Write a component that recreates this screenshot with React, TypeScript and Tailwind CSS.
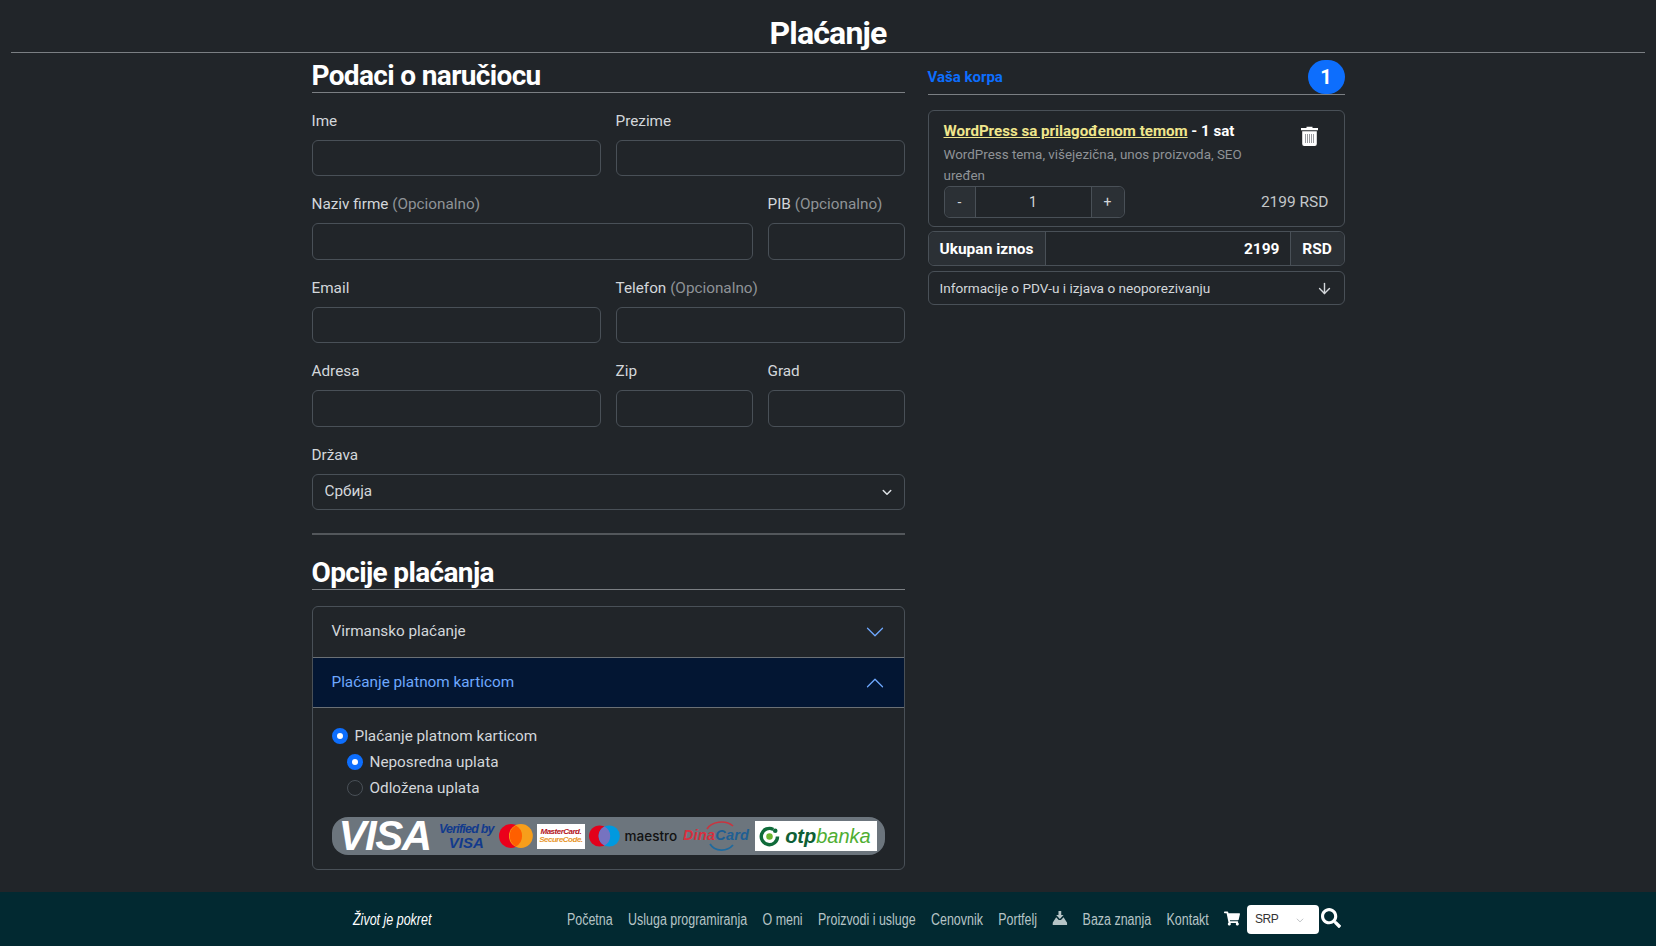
import { ArrowDown } from "lucide-react";
import { FaSearch, FaShoppingCart } from "react-icons/fa";

const Field = ({
  label,
  note,
  span,
}: {
  label: string;
  note?: string;
  span: string;
}) => (
  <div className={span}>
    <label className="block h-6 mb-[7px] leading-6 whitespace-nowrap">
      {label}
      {note && <span className="text-[#8f9397]"> {note}</span>}
    </label>
    <input
      type="text"
      className="block w-full h-[36.5px] rounded-md border border-[#495057] bg-[#212529]"
    />
  </div>
);

const Chevron = ({ up }: { up?: boolean }) => (
  <svg viewBox="0 0 16 16" className="w-5 h-5 text-[#6ea8fe]" fill="currentColor">
    <path
      fillRule="evenodd"
      transform={up ? "rotate(180 8 8)" : undefined}
      d="M1.646 4.646a.5.5 0 0 1 .708 0L8 10.293l5.646-5.647a.5.5 0 0 1 .708.708l-6 6a.5.5 0 0 1-.708 0l-6-6a.5.5 0 0 1 0-.708z"
    />
  </svg>
);

const Radio = ({ checked, label, indent }: { checked?: boolean; label: string; indent?: boolean }) => (
  <label className={`flex items-center gap-[7px] h-[26px] ${indent ? "ml-[15px]" : ""}`}>
    <input
      type="radio"
      readOnly
      checked={!!checked}
      className="appearance-none w-4 h-4 rounded-full border border-[#495057] bg-[#212529] checked:bg-white checked:border-[5px] checked:border-[#0d6efd]"
    />
    {label}
  </label>
);

const CardLogos = () => (
  <div className="flex items-center h-[38px] rounded-[16px] bg-[#6c757d] pl-[7px] pr-[8px] font-['Liberation_Sans',sans-serif]">
    <span className="w-[92px] text-[42px] leading-none font-bold italic tracking-[-1.5px] text-white">VISA</span>
    <div className="w-[58px] ml-[7px] text-center italic font-bold text-[#123a8c]">
      <div className="text-[12.5px] leading-[13px] tracking-[-0.8px] whitespace-nowrap">Verified by</div>
      <div className="text-[15px] leading-[14px]">VISA</div>
    </div>
    <svg viewBox="0 0 34 24" className="w-[34px] h-6 ml-[4px]">
      <circle cx="12" cy="12" r="12" fill="#eb001b" />
      <circle cx="22" cy="12" r="12" fill="#f79e1b" />
      <path d="M17 1.5a12 12 0 0 1 0 21a12 12 0 0 1 0-21z" fill="#ff5f00" />
    </svg>
    <div className="w-[48px] h-[25px] ml-[4px] bg-white flex flex-col items-center justify-center text-[8px] leading-[8px] font-bold italic">
      <span className="text-[#b3131b] tracking-[-0.5px]">MasterCard.</span>
      <span className="text-[#e8962b] tracking-[-0.5px]">SecureCode.</span>
    </div>
    <svg viewBox="0 0 32 24" className="w-[31px] h-6 ml-[4px]">
      <circle cx="11" cy="12" r="11" fill="#e3001b" />
      <circle cx="21" cy="12" r="11" fill="#0099df" />
      <path d="M16 2.2a11 11 0 0 1 0 19.6a11 11 0 0 1 0-19.6z" fill="#7673c0" />
    </svg>
    <span className="ml-[5px] text-[13.5px] font-medium text-[#111] font-['Inter',sans-serif]">maestro</span>
    <div className="relative w-[66px] ml-[6px] h-[32px] flex items-center justify-center">
      <svg viewBox="0 0 66 32" className="absolute inset-0 w-full h-full" fill="none">
        <path d="M24 9C28 2 42 -1 50 6" stroke="#c9343f" strokeWidth="1.6" />
        <path d="M27 24C32 32 44 32 50 25" stroke="#1f6a9e" strokeWidth="1.8" />
      </svg>
      <span className="relative text-[14.5px] font-bold italic tracking-[0.2px] whitespace-nowrap">
        <span className="text-[#d7303f]">Dina</span>
        <span className="text-[#1f5f93]">Card</span>
      </span>
    </div>
    <div className="flex items-center w-[122px] h-[30px] ml-[6px] bg-white pl-[4px] whitespace-nowrap">
      <svg viewBox="0 0 22 22" className="w-[21px] h-[21px]" fill="none">
        <path d="M15 3.6A8.5 8.5 0 1 0 19.4 11" stroke="#0f6b3a" strokeWidth="3.6" />
        <circle cx="11" cy="11" r="3.4" fill="#6cb52d" />
        <circle cx="17" cy="5" r="2.4" fill="#0f6b3a" />
      </svg>
      <span className="ml-[5px] text-[20px] leading-none font-bold italic text-[#0f5f36]">otp</span>
      <span className="text-[20px] leading-none italic text-[#4fae32]">banka</span>
    </div>
  </div>
);

const TrashIcon = () => (
  <svg viewBox="0 0 17 20" className="w-[17px] h-5">
    <path d="M5.5 2V.8h6V2H17v2.2H0V2z" fill="#fff" />
    <path fillRule="evenodd" d="M1.2 5.3h14.6V18a2 2 0 0 1-2 2H3.2a2 2 0 0 1-2-2z" fill="#fff" />
    <path d="M4.5 8v9M6.5 8v9M8.5 8v9M10.5 8v9M12.5 8v9" stroke="#8d9094" strokeWidth="0.9" />
  </svg>
);

const TrayIcon = () => (
  <svg viewBox="0 0 16 14" className="w-[19px] h-[14px] -mt-[4px]" preserveAspectRatio="none" fill="#b6c4c6">
    <path d="M6.5 0h3v4h2.5L8 8 4 4h2.5z" />
    <path d="M4 6.2 6.8 9h2.4L12 6.2 16 12v2H0v-2z" />
  </svg>
);

const navLinks = ["Početna", "Usluga programiranja", "O meni", "Proizvodi i usluge", "Cenovnik", "Portfelj"];

export default function App() {
  return (
    <div className="h-[946px] overflow-hidden flex flex-col bg-[#212529] text-[15.3px] text-[#d3d7db] font-['Roboto',sans-serif]">
      <header className="mx-[11px] h-[53px] border-b border-[#7b7f83]">
        <h1 className="pt-[13px] text-center text-[32px] leading-[40px] font-bold tracking-[-0.8px] text-white">Plaćanje</h1>
      </header>

      <main className="flex-1 mx-auto w-[1033px] flex gap-[23px]">
        <div className="w-[593px]">
          <h2 className="h-10 pt-[3px] border-b border-[#7b7f83] text-[28px] leading-[40px] font-bold tracking-[-0.65px] text-white">
            Podaci o naručiocu
          </h2>
          <div className="grid grid-cols-12 gap-x-[15px] gap-y-[16px] mt-[15.5px]">
            <Field span="col-span-6" label="Ime" />
            <Field span="col-span-6" label="Prezime" />
            <Field span="col-span-9" label="Naziv firme" note="(Opcionalno)" />
            <Field span="col-span-3" label="PIB" note="(Opcionalno)" />
            <Field span="col-span-6" label="Email" />
            <Field span="col-span-6" label="Telefon" note="(Opcionalno)" />
            <Field span="col-span-6" label="Adresa" />
            <Field span="col-span-3" label="Zip" />
            <Field span="col-span-3" label="Grad" />
            <div className="col-span-12">
              <label className="block h-6 mb-[7px] leading-6">Država</label>
              <div className="relative">
                <select className="block w-full h-[36.5px] appearance-none rounded-md border border-[#495057] bg-[#212529] px-3">
                  <option>Србија</option>
                </select>
                <svg viewBox="0 0 16 16" className="absolute right-[12px] top-[12px] w-3 h-3" fill="none" stroke="#dee2e6" strokeWidth="2" strokeLinecap="round" strokeLinejoin="round">
                  <path d="m3 6 5 5 5-5" />
                </svg>
              </div>
            </div>
          </div>

          <hr className="mt-[23px] border-t-2 border-[#53575b]" />

          <h2 className="mt-[18px] h-[37px] border-b border-[#7b7f83] text-[28px] leading-[40px] font-bold tracking-[-0.65px] text-white">
            Opcije plaćanja
          </h2>

          <div className="mt-[16px] rounded-md border border-[#495057]">
            <div className="h-[50px] flex items-center justify-between pl-[19px] pr-[19px]">
              <span className="-mt-[2px]">Virmansko plaćanje</span>
              <Chevron />
            </div>
            <div className="h-[51px] flex items-center justify-between pl-[19px] pr-[19px] bg-[#031633] border-y border-[#6b7075] text-[#6ea8fe]">
              <span>Plaćanje platnom karticom</span>
              <Chevron up />
            </div>
            <div className="px-[19px] pt-[15px] pb-[14px]">
              <Radio checked label="Plaćanje platnom karticom" />
              <Radio checked indent label="Neposredna uplata" />
              <Radio indent label="Odložena uplata" />
              <div className="mt-[16px]">
                <CardLogos />
              </div>
            </div>
          </div>
        </div>

        <aside className="w-[417px]">
          <div className="h-[43px] flex items-center justify-between border-b border-[#7b7f83] mt-[-1px] pt-[8px]">
            <span className="text-[15px] font-bold text-[#0d6efd]">Vaša korpa</span>
            <span className="w-[37px] h-[34px] rounded-full bg-[#0d6efd] flex items-center justify-center text-[20px] font-bold text-white">1</span>
          </div>

          <div className="mt-[15px] h-[117px] rounded-md border border-[#495057] px-[15px] pt-[10px]">
            <div className="flex justify-between">
              <div className="w-[300px]">
                <div className="text-[15.1px] leading-5 font-bold text-white whitespace-nowrap">
                  <a className="underline text-[#f0e68c]">WordPress sa prilagođenom temom</a> - 1 sat
                </div>
                <p className="mt-[3px] text-[13.4px] leading-[21px] text-[#8f9397]">
                  WordPress tema, višejezična, unos proizvoda, SEO uređen
                </p>
              </div>
              <div className="pr-[11px] pt-[5px]">
                <TrashIcon />
              </div>
            </div>
            <div className="flex items-center justify-between">
              <div className="flex w-[181px] h-8 rounded-md border border-[#495057] text-[14px]">
                <span className="w-[30px] flex items-center justify-center bg-[#2b3035] rounded-l-md">-</span>
                <span className="flex-1 flex items-center justify-center border-x border-[#495057]">1</span>
                <span className="w-[32px] flex items-center justify-center bg-[#2b3035] rounded-r-md">+</span>
              </div>
              <span className="pt-px text-[15.5px] text-[#c3c7ca]">2199 RSD</span>
            </div>
          </div>

          <div className="mt-[4px] h-[35px] flex rounded-md border border-[#495057] text-[15.5px] font-bold text-white">
            <span className="w-[117px] pt-[2px] flex items-center justify-center bg-[#2b3035] rounded-l-md border-r border-[#495057]">Ukupan iznos</span>
            <span className="flex-1 pt-[2px] flex items-center justify-end pr-[10px]">2199</span>
            <span className="w-[54px] pt-[2px] flex items-center justify-center bg-[#2b3035] rounded-r-md border-l border-[#495057]">RSD</span>
          </div>

          <div className="mt-[5px] h-[34px] flex items-center justify-between rounded-md border border-[#495057] pl-[11px] pr-[11px] text-[13.6px]">
            <span>Informacije o PDV-u i izjava o neoporezivanju</span>
            <ArrowDown size={17} strokeWidth={2} />
          </div>
        </aside>
      </main>

      <footer className="h-[54px] bg-[#022931] flex items-center pl-[353px] text-[#b6c4c6] font-['Liberation_Sans',sans-serif] text-[16px]">
        <div className="w-[214px] shrink-0">
          <span className="block w-max origin-left scale-x-[0.78] italic text-white mt-[2px]">Život je pokret</span>
        </div>
        <div className="w-[657px] shrink-0">
          <nav className="flex items-center w-max gap-[19.8px] origin-left scale-x-[0.778] mt-[2px] whitespace-nowrap">
            {navLinks.map((link) => (
              <a key={link}>{link}</a>
            ))}
            <TrayIcon />
            <a>Baza znanja</a>
            <a>Kontakt</a>
          </nav>
        </div>
        <FaShoppingCart className="w-[16px] h-[15px] -mt-[2px] text-white" />
        <div className="relative ml-[7px]">
          <select className="block w-[72px] h-[29px] rounded-[4px] bg-white px-2 text-[12px] tracking-[-0.4px] text-[#333] appearance-none">
            <option>SRP</option>
          </select>
          <svg viewBox="0 0 16 16" className="absolute right-[14px] top-[10px] w-[10px] h-[10px]" fill="none" stroke="#b9bcbf" strokeWidth="1.5">
            <path d="m3 6 5 5 5-5" />
          </svg>
        </div>
        <FaSearch className="ml-[2px] -mt-[2px] w-[20px] h-[20px] text-white" />
      </footer>
    </div>
  );
}
